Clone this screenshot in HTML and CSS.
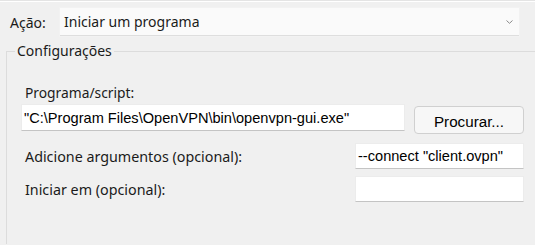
FILE: index.html
```html
<!DOCTYPE html>
<html lang="pt">
<head>
<meta charset="utf-8">
<link rel="stylesheet" href="styles.css">
</head>
<body>
<div class="page">
  <div class="topstrip"></div>
  <div class="action-row">
    <span class="action-label">Ação:</span>
    <div class="combo">
      <span class="combo-text">Iniciar um programa</span>
      <svg class="chev" width="7" height="4" viewBox="0 0 7 4"><path d="M0.5 0.5 L3.5 3.3 L6.5 0.5" fill="none" stroke="#8a8a8a" stroke-width="1"/></svg>
    </div>
  </div>
  <fieldset class="group">
    <legend class="group-title">Configurações</legend>
    <div class="group-body">
      <div class="prog-label">Programa/script:</div>
      <div class="prog-row">
        <div class="field field-prog">"C:\Program Files\OpenVPN\bin\openvpn-gui.exe"</div>
        <div class="btn">Procurar...</div>
      </div>
      <div class="opt-row opt-args">
        <span class="opt-label">Adicione argumentos (opcional):</span>
        <div class="field field-small">--connect "client.ovpn"</div>
      </div>
      <div class="opt-row opt-start">
        <span class="opt-label">Iniciar em (opcional):</span>
        <div class="field field-small"></div>
      </div>
    </div>
  </fieldset>
</div>
</body>
</html>
```

FILE: styles.css
```css
html, body {
  margin: 0;
  padding: 0;
  background: #f0f0f0;
}
.page {
  width: 535px;
  height: 245px;
  overflow: hidden;
  background: #f0f0f0;
  font-family: "Noto Sans", "Open Sans", sans-serif;
  color: #1b1b1b;
}
.topstrip {
  height: 1px;
  border-top: 1px solid #e4e4e4;
  background: #ffffff;
}
.action-row {
  display: flex;
  align-items: center;
  margin-top: 6px;
  padding-left: 10px;
  height: 28px;
}
.action-label {
  font-size: 14px;
  width: 50px;
}
.combo {
  width: 459px;
  height: 28px;
  background: #fafafa;
  border-bottom: 1px solid #dedede;
  box-shadow: 0 0 0 1px #f2f2f2;
  display: flex;
  align-items: center;
  justify-content: space-between;
  padding: 0 6px 0 4px;
  box-sizing: border-box;
}
.combo-text {
  font-size: 14px;
}
.group {
  margin: 7px 0 0 6px;
  padding: 0;
  border: none;
  border-top: 1px solid #dcdcdc;
  border-left: 1px solid #dcdcdc;
  min-width: 0;
  height: 200px;
}
.group-title {
  font-size: 14px;
  line-height: 16px;
  padding: 0 2px;
  margin-left: 8px;
}
.group-body {
  padding: 0 11px 0 14px;
}
.prog-label {
  font-size: 13.8px;
  margin-top: 25px;
  line-height: 18px;
  padding-left: 4px;
}
.prog-row {
  display: flex;
  align-items: flex-start;
  margin-top: 2px;
  gap: 9px;
}
.field {
  background: #ffffff;
  border: 1px solid #ececec;
  border-bottom: 1px solid #c4c4c4;
  box-sizing: border-box;
  font-family: "Liberation Sans", Arial, sans-serif;
  font-size: 14.6px;
  color: #000;
  display: flex;
  align-items: center;
  padding-left: 2px;
  white-space: nowrap;
  overflow: hidden;
}
.field-prog {
  width: 384px;
  height: 27px;
}
.btn {
  margin-top: 2px;
  width: 110px;
  height: 28px;
  box-sizing: border-box;
  border: 1px solid #d0d0d0;
  border-radius: 4px;
  background: #f7f7f7;
  display: flex;
  align-items: center;
  justify-content: center;
  font-family: "Liberation Sans", Arial, sans-serif;
  font-size: 15.2px;
  color: #000;
  padding-top: 3px;
}
.opt-row {
  display: flex;
  align-items: center;
  justify-content: space-between;
  padding-left: 4px;
}
.opt-args {
  margin-top: 9px;
}
.opt-start {
  margin-top: 7px;
}
.opt-label {
  font-size: 14.3px;
}
.field-small {
  width: 169px;
  height: 26px;
}
```
